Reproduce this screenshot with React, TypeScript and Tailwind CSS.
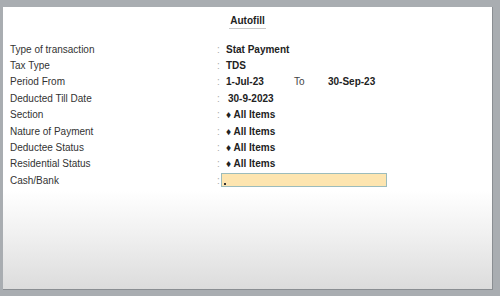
import React from "react";

const rows: { label: string; value: React.ReactNode }[] = [
  { label: "Type of transaction", value: <span className="font-bold">Stat Payment</span> },
  { label: "Tax Type", value: <span className="font-bold">TDS</span> },
  {
    label: "Period From",
    value: (
      <div className="flex">
        <span className="font-bold w-[68px]">1-Jul-23</span>
        <span className="w-[34px] text-[#444]">To</span>
        <span className="font-bold">30-Sep-23</span>
      </div>
    ),
  },
  { label: "Deducted Till Date", value: <span className="font-bold pl-[2px]">30-9-2023</span> },
  { label: "Section", value: <span className="font-bold">♦ All Items</span> },
  { label: "Nature of Payment", value: <span className="font-bold">♦ All Items</span> },
  { label: "Deductee Status", value: <span className="font-bold">♦ All Items</span> },
  { label: "Residential Status", value: <span className="font-bold">♦ All Items</span> },
];

export default function App() {
  return (
    <div
      className="w-[500px] h-[296px] bg-[#a9adb1] pt-[7px] pl-[3px] pr-[7px] pb-[6px]"
      style={{ fontFamily: '"Liberation Sans", Arial, sans-serif' }}
    >
      <div className="h-full w-full border-r border-b border-[#8a8e92] bg-[linear-gradient(to_bottom,#ffffff_0%,#ffffff_65%,#f1f1f1_80%,#dcdcdc_100%)] text-[10px] text-[#222]">
        <div className="flex justify-center pt-[6px]">
          <div className="font-bold leading-[15px] border-b border-[#c8c8c8] px-[1px]">Autofill</div>
        </div>
        <div className="pt-[12px] pl-[7px]">
          {rows.map((r) => (
            <div key={r.label} className="flex items-center h-[16.4px]">
              <div className="w-[207px] text-[#333]">{r.label}</div>
              <div className="w-[9px] text-[#aaa]">:</div>
              {r.value}
            </div>
          ))}
          <div className="flex items-center h-[16.4px]">
            <div className="w-[207px] text-[#333]">Cash/Bank</div>
            <div className="w-[4px] text-[#aaa]">:</div>
            <div className="relative w-[166px] h-[14px] bg-[#fde5b0] border border-[#9cbcbc]">
              <div className="absolute left-[2px] bottom-[1px] w-[2px] h-[2px] bg-[#333]" />
            </div>
          </div>
        </div>
      </div>
    </div>
  );
}
